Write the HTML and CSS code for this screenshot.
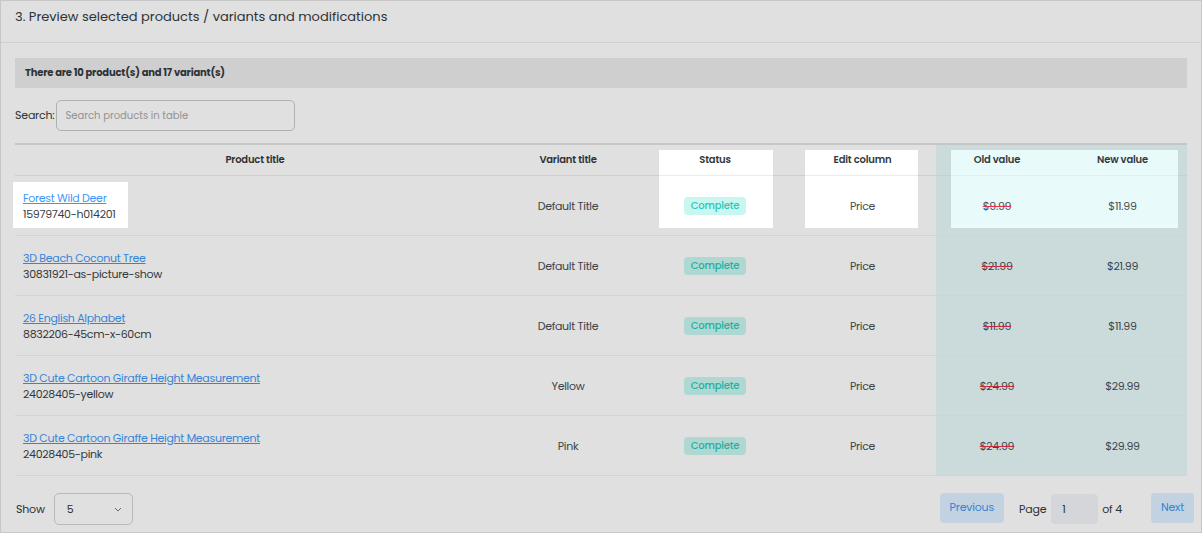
FILE: index.html
```html
<!DOCTYPE html>
<html lang="en">
<head>
    <meta charset="UTF-8">
    <meta name="viewport" content="width=device-width, initial-scale=1.0">
    <title>Preview selected products</title>
    <link rel="stylesheet" href="styles.css">
</head>
<body>
    <div class="card">
        <div class="card-header">3. Preview selected products / variants and modifications</div>
        <div class="card-body">
            <div class="info-bar">There are 10 product(s) and 17 variant(s)</div>

            <div class="search-row">
                <label for="search">Search:</label>
                <input type="text" id="search" placeholder="Search products in table">
            </div>

            <table class="preview-table">
                <thead>
                    <tr>
                        <th class="col-product">Product title</th>
                        <th class="col-variant">Variant title</th>
                        <th class="col-status">Status</th>
                        <th class="col-edit">Edit column</th>
                        <th class="col-old value-col">Old value</th>
                        <th class="col-new value-col">New value</th>
                    </tr>
                </thead>
                <tbody>
                    <tr>
                        <td class="product"><a href="#">Forest Wild Deer</a><div class="sku">15979740-h014201</div></td>
                        <td>Default Title</td>
                        <td><span class="badge">Complete</span></td>
                        <td>Price</td>
                        <td class="value-col"><s>$9.99</s></td>
                        <td class="value-col">$11.99</td>
                    </tr>
                    <tr>
                        <td class="product"><a href="#">3D Beach Coconut Tree</a><div class="sku">30831921-as-picture-show</div></td>
                        <td>Default Title</td>
                        <td><span class="badge">Complete</span></td>
                        <td>Price</td>
                        <td class="value-col"><s>$21.99</s></td>
                        <td class="value-col">$21.99</td>
                    </tr>
                    <tr>
                        <td class="product"><a href="#">26 English Alphabet</a><div class="sku">8832206-45cm-x-60cm</div></td>
                        <td>Default Title</td>
                        <td><span class="badge">Complete</span></td>
                        <td>Price</td>
                        <td class="value-col"><s>$11.99</s></td>
                        <td class="value-col">$11.99</td>
                    </tr>
                    <tr>
                        <td class="product"><a href="#">3D Cute Cartoon Giraffe Height Measurement</a><div class="sku">24028405-yellow</div></td>
                        <td>Yellow</td>
                        <td><span class="badge">Complete</span></td>
                        <td>Price</td>
                        <td class="value-col"><s>$24.99</s></td>
                        <td class="value-col">$29.99</td>
                    </tr>
                    <tr>
                        <td class="product"><a href="#">3D Cute Cartoon Giraffe Height Measurement</a><div class="sku">24028405-pink</div></td>
                        <td>Pink</td>
                        <td><span class="badge">Complete</span></td>
                        <td>Price</td>
                        <td class="value-col"><s>$24.99</s></td>
                        <td class="value-col">$29.99</td>
                    </tr>
                </tbody>
            </table>

            <div class="table-footer">
                <div class="show-row">
                    <span>Show</span>
                    <div class="select">
                        <span>5</span>
                        <svg width="8" height="5" viewBox="0 0 8 5"><path d="M1 1l3 3 3-3" fill="none" stroke="#777" stroke-width="1"/></svg>
                    </div>
                </div>
                <div class="pager">
                    <button class="pager-btn">Previous</button>
                    <span class="page-label">Page</span>
                    <input type="text" class="page-input" value="1">
                    <span class="page-of">of 4</span>
                    <button class="pager-btn next">Next</button>
                </div>
            </div>
        </div>
    </div>

    <!-- tour overlay with cut-outs around the highlighted cells -->
    <svg class="tour-overlay" width="1202" height="533" viewBox="0 0 1202 533">
        <path fill-rule="evenodd" fill="rgba(0,0,0,0.12)"
              d="M0 0H1202V533H0Z
                 M13 182H128V228H13Z
                 M659 150H773V228H659Z
                 M805 150H918V228H805Z
                 M951 150H1178V228H951Z"/>
    </svg>
</body>
</html>
```

FILE: styles.css
```css
body {
    margin: 0;
    font-family: Poppins, Inter, "Open Sans", sans-serif;
    color: #343a40;
    background-color: #fff;
}
.card {
    height: 531px;
    border: 1px solid #e3e3e3;
    display: flex;
    flex-direction: column;
}
.card-header {
    height: 42px;
    box-sizing: border-box;
    padding: 7px 14px 0;
    font-size: 13px;
    line-height: 18px;
    border-bottom: 1px solid #ececec;
}
.card-body {
    padding: 15px 14px 0;
}
.info-bar {
    background-color: #ececec;
    height: 30px;
    line-height: 30px;
    padding-left: 10px;
    font-size: 10px;
    font-weight: 700;
    letter-spacing: -0.2px;
}
.search-row {
    display: flex;
    align-items: center;
    gap: 2px;
    margin-top: 12px;
    font-size: 11px;
    letter-spacing: -0.2px;
}
.search-row input {
    width: 239px;
    height: 31px;
    box-sizing: border-box;
    border: 1px solid #c9c9c9;
    border-radius: 5px;
    padding: 0 8px;
    font-family: inherit;
    font-size: 10px;
}
.search-row input::placeholder {
    color: #a8a8a8;
}
.preview-table {
    width: 1172px;
    margin-top: 12px;
    border-collapse: collapse;
    table-layout: fixed;
    font-size: 11px;
    letter-spacing: -0.3px;
}
.preview-table th {
    height: 30px;
    padding: 0;
    font-size: 10px;
    font-weight: 600;
    letter-spacing: -0.2px;
    border-top: 2px solid #e2e2e2;
    border-bottom: 1px solid #eee9ec;
}
.preview-table td {
    height: 60px;
    padding: 0 8px;
    box-sizing: border-box;
    text-align: center;
    line-height: 16px;
    color: #474d54;
    border-bottom: 1px solid #f1f1f4;
}
.col-product { width: 480px; }
.col-variant { width: 146px; }
.col-status { width: 148px; }
.col-edit { width: 147px; }
.col-old { width: 122px; }
.col-new { width: 129px; }
.value-col {
    background-color: #e8fafa;
}
.preview-table td.product {
    text-align: left;
}
.product a {
    color: #3c98f6;
    text-decoration: underline;
}
.sku {
    color: #3a3f45;
}
.badge {
    display: inline-block;
    background-color: #c8f6f1;
    color: #2cc7b5;
    font-size: 10px;
    font-weight: 500;
    padding: 2px 7px;
    border-radius: 4px;
    line-height: 14px;
    letter-spacing: -0.2px;
}
s {
    text-decoration-color: #e3334f;
    text-decoration-thickness: 1px;
}
.table-footer {
    display: flex;
    justify-content: space-between;
    align-items: center;
    margin-top: 17px;
    font-size: 11px;
    letter-spacing: -0.2px;
}
.show-row {
    display: flex;
    align-items: center;
    gap: 9px;
    padding-left: 1px;
}
.select {
    width: 79px;
    height: 32px;
    box-sizing: border-box;
    border: 1px solid #d3d3d3;
    border-radius: 5px;
    display: flex;
    align-items: center;
    justify-content: space-between;
    padding: 0 10px 0 12px;
}
.pager {
    display: flex;
    align-items: center;
    margin-right: -7px;
}
.pager-btn {
    height: 30px;
    border: none;
    border-radius: 4px;
    background-color: #dff0ff;
    color: #3d96f2;
    font-family: inherit;
    font-size: 11px;
    letter-spacing: -0.2px;
    padding: 0 10px;
    margin-top: -3px;
}
.page-label {
    margin-left: 15px;
    margin-right: 5px;
}
.page-input {
    width: 47px;
    height: 30px;
    box-sizing: border-box;
    border: none;
    border-radius: 4px;
    background-color: #f2f4f8;
    padding: 0 11px;
    font-family: inherit;
    font-size: 11px;
    color: #343a40;
}
.page-of {
    margin-left: 4px;
    margin-right: 29px;
}
.tour-overlay {
    position: fixed;
    top: 0;
    left: 0;
    pointer-events: none;
}
```
